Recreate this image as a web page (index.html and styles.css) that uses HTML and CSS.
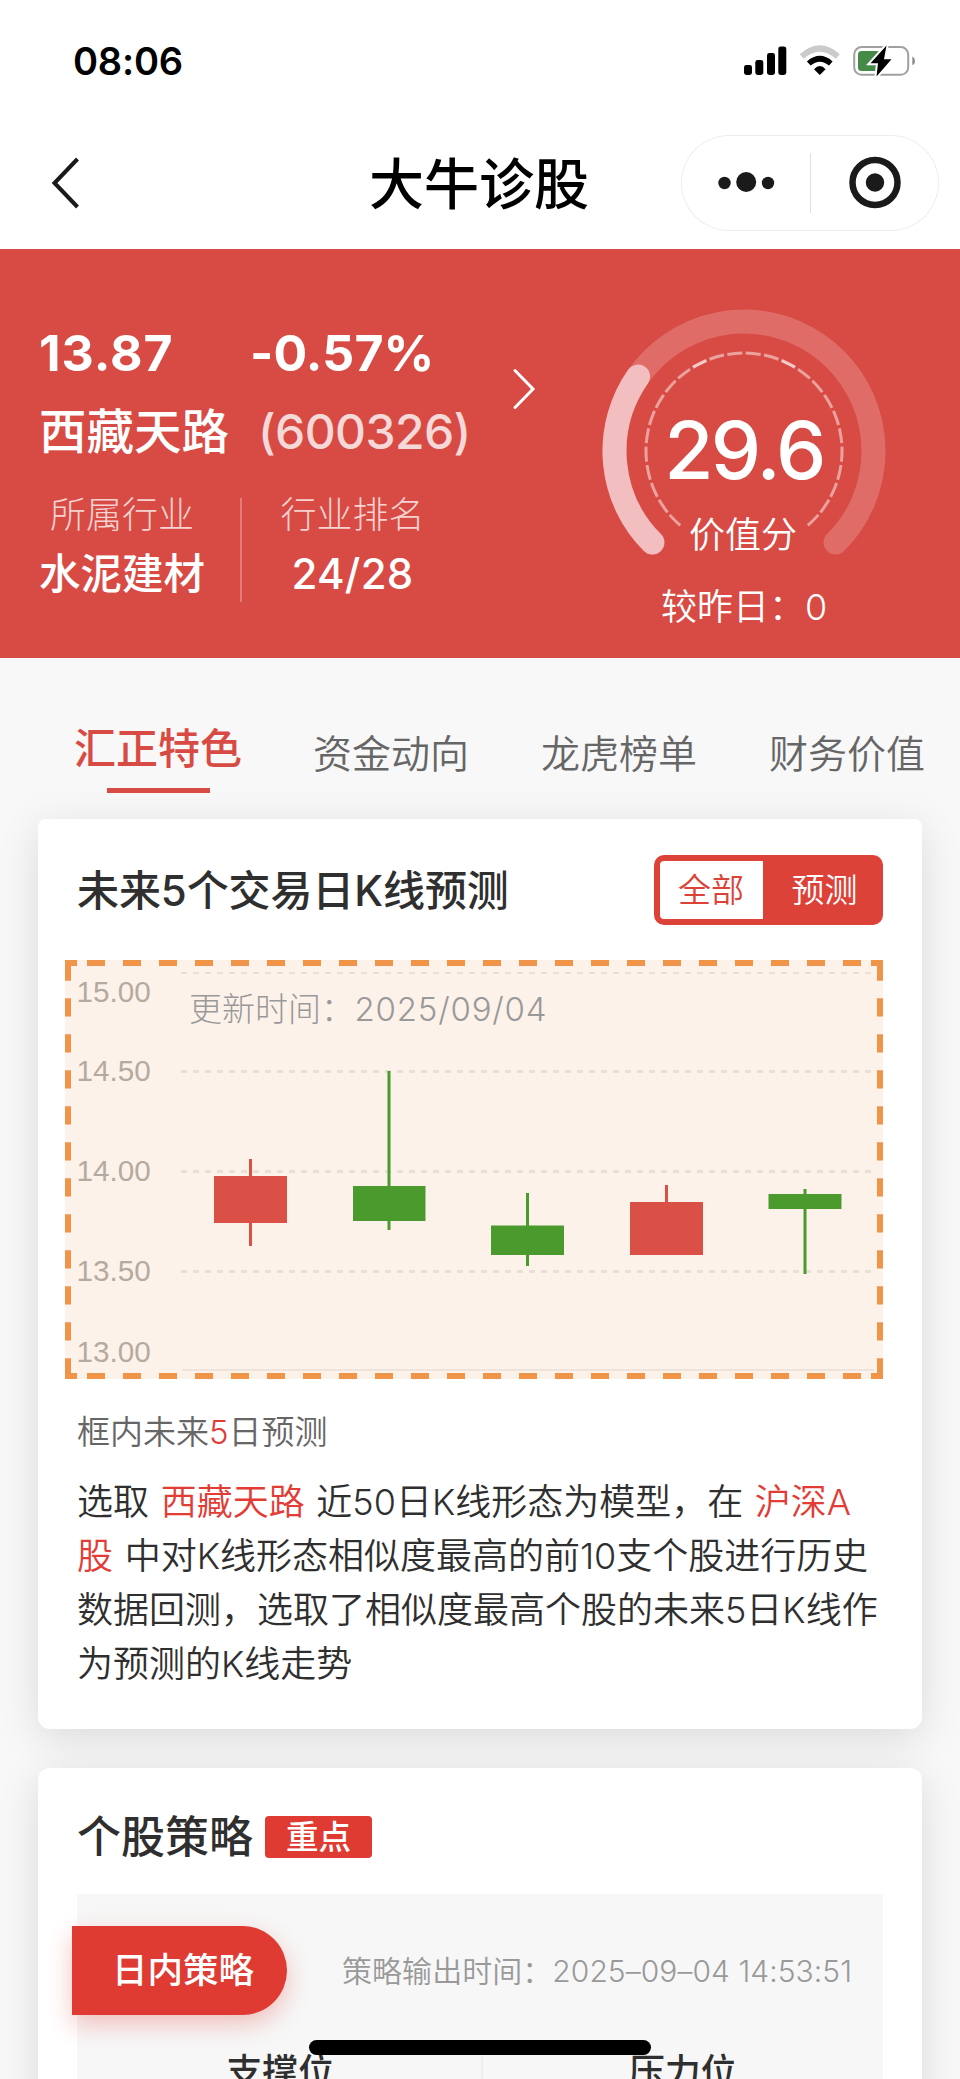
FILE: index.html
```html
<!DOCTYPE html>
<html lang="zh-CN">
<head>
<meta charset="utf-8">
<title>大牛诊股</title>
<link rel="stylesheet" href="styles.css">
</head>
<body>
<div class="screen">
  <header class="top">
    <div class="status">
      <span class="clock">08:06</span>
      <svg class="status-icons" width="176" height="36" viewBox="740 43 176 36">
        <rect x="744" y="65" width="8" height="10" rx="2.4"/>
        <rect x="755.3" y="60" width="8" height="15" rx="2.4"/>
        <rect x="767" y="53" width="8" height="22" rx="2.4"/>
        <rect x="778.3" y="46.500" width="8" height="28.500" rx="2.400"/>
        <path d="M801.700 56.500Q819.800 40.500 837.800 56.500" fill="none" stroke="#cbcbcb" stroke-width="6"/>
        <path d="M808.800 63.500Q819.800 54 830.800 63.500" fill="none" stroke="#000" stroke-width="5.600"/>
        <path d="M819.800 75L814 69.200Q819.800 62.800 825.600 69.200Z"/>
        <rect x="854.200" y="47" width="54" height="27.800" rx="7.500" fill="none" stroke="#a0a0a0" stroke-width="2"/>
        <path d="M912.300 56.500Q915 57.800 915 61T912.300 65.300Z" fill="#8d8d8d"/>
        <rect x="858" y="51" width="22" height="20" rx="3.500" fill="#458b47"/>
        <path d="M886.500 45.500L870.500 63.200H878L876.500 76.500L891.500 59.300H884Z" stroke="#fff" stroke-width="4"/>
        <path d="M886.500 45.500L870.500 63.200H878L876.500 76.500L891.500 59.300H884Z"/>
      </svg>
    </div>
    <div class="nav">
      <svg class="back" width="30" height="54" viewBox="51 156 30 54"><path d="M77.500 159L54.500 183L77.500 207" fill="none" stroke="#1a1a1a" stroke-width="4"/></svg>
      <h1 class="title">大牛诊股</h1>
      <div class="capsule">
        <svg width="258" height="96" viewBox="681 135 258 96">
          <circle cx="724.500" cy="183" r="6.200"/><circle cx="746.200" cy="182" r="10"/><circle cx="768" cy="183" r="6.200"/>
          <path d="M810.500 153V213" stroke="#dedede"/>
          <circle cx="875" cy="182.500" r="22.500" fill="none" stroke="#1a1a1a" stroke-width="6.500"/><circle cx="875" cy="182.500" r="9.200"/>
        </svg>
      </div>
    </div>
  </header>

  <section class="hero">
    <div class="quote">
      <div class="price-row"><b class="price">13.87</b><b class="change">-0.57%</b></div>
      <div class="name-row"><span class="name">西藏天路</span><span class="code">(600326)</span></div>
      <div class="facts">
        <div class="fact industry"><span class="fact-label">所属行业</span><span class="fact-value">水泥建材</span></div>
        <div class="fact rank"><span class="fact-label">行业排名</span><span class="fact-value number">24/28</span></div>
      </div>
    </div>
    <svg class="go" width="26" height="44" viewBox="511 367 26 44"><path d="M515 370.500L533 389L515 407.500" fill="none" stroke="#fff" stroke-width="3" stroke-linecap="round"/></svg>
    <div class="gauge">
      <svg class="dial" width="284" height="250" viewBox="-142 -142 284 250" fill="none">
        <path d="M-91.600 91.600A129.500 129.500 0 1 1 91.600 91.600" stroke="#fff" stroke-opacity=".19" stroke-width="24" stroke-linecap="round"/>
        <path d="M-91.600 91.600A129.500 129.500 0 0 1 -105.900 -74.500" stroke="#f2bec0" stroke-width="24" stroke-linecap="round"/>
        <g stroke="#fff" stroke-opacity=".48" stroke-width="3" stroke-dasharray="15.100 3.370" stroke-dashoffset="-1.680">
          <path d="M0 -98A98 98 0 0 1 63.800 74.400"/><path d="M0 -98A98 98 0 0 0 -63.800 74.400"/>
        </g>
        <path d="M-51 -84L-37.500 -90.500M51 -84L37.500 -90.500" stroke="#fff" stroke-opacity=".45" stroke-width="3"/>
      </svg>
      <div class="score"><span class="score-value">29.6</span><span class="score-label">价值分</span><span class="score-diff">较昨日：0</span></div>
    </div>
  </section>

  <nav class="tabs">
    <span class="tab active">汇正特色</span><span class="tab">资金动向</span><span class="tab">龙虎榜单</span><span class="tab">财务价值</span>
  </nav>

  <section class="card forecast">
    <div class="card-head">
      <h2 class="card-title">未来5个交易日K线预测</h2>
      <div class="toggle"><span class="option on">全部</span><span class="option">预测</span></div>
    </div>
    <svg class="chart" width="818" height="419" viewBox="65 960 818 419">
      <rect x="65" y="960" width="818" height="419" fill="#fdf2e9"/>
      <g stroke="#e9dfd6" stroke-dasharray="6 6">
        <path d="M181 973H872" stroke-width="2"/>
        <path d="M181 1071.500H872M181 1171.500H872M181 1271.500H872" stroke-width="3"/>
      </g>
      <path d="M182 1370H874" stroke="#e9dfd6" stroke-width="1.500"/>
      <g stroke="#f0944a" stroke-width="6" fill="none">
        <path d="M87 963H862M87 1376H862" stroke-dasharray="18 18"/>
        <path d="M68 998.300V1341M880 998.300V1341" stroke-dasharray="18.300 17.700"/>
        <path d="M77 963H68V980.700M871 963H880V980.700M77 1376H68V1358.300M871 1376H880V1358.300"/>
      </g>
      <g class="axis"><text x="76.500" y="1002">15.00</text><text x="76.500" y="1081">14.50</text><text x="76.500" y="1181">14.00</text><text x="76.500" y="1281">13.50</text><text x="76.500" y="1362">13.00</text></g>
      <text class="updated" x="189" y="1021">更新时间：<tspan class="date" x="354.500">2025/09/04</tspan></text>
      <g fill="#da5046">
        <path d="M214 1176h73v47h-73zM249 1159h3v87h-3z"/>
        <path d="M630 1202h73v53h-73zM665 1185h3v30h-3z"/>
      </g>
      <g fill="#4a9a2e">
        <path d="M353 1186h72.500v35h-72.500zM387.500 1071h3v159h-3z"/>
        <path d="M491 1225.500h73v29.500h-73zM526 1193h3v73h-3z"/>
        <path d="M768.500 1194h73v15h-73zM803.500 1189h3v85h-3z"/>
      </g>
    </svg>
    <p class="note">框内未来<em>5</em>日预测</p>
    <p class="explain"><span class="line">选取 <em>西藏天路</em> 近50日K线形态为模型，在 <em>沪深A</em></span><span class="line"><em>股</em> 中对K线形态相似度最高的前10支个股进行历史</span><span class="line">数据回测，选取了相似度最高个股的未来5日K线作</span><span class="line">为预测的K线走势</span></p>
  </section>

  <section class="card strategy">
    <div class="strategy-head"><h2 class="strategy-title">个股策略</h2><span class="badge">重点</span></div>
    <div class="panel">
      <div class="panel-head"><span class="pill">日内策略</span><span class="stamp">策略输出时间：<span class="stamp-time">2025–09–04 14:53:51</span></span></div>
      <div class="levels"><span class="level">支撑位</span><span class="level">压力位</span></div>
    </div>
  </section>
  <div class="home-bar"></div>
</div>
</body>
</html>
```
FILE: styles.css
```css
* { box-sizing: border-box; margin: 0; padding: 0; }
body { background: #f8f8f8; font-family: Inter, "Noto Sans CJK SC", sans-serif; color: #2f2f2f; }
svg { display: block; flex: none; }
span, b, h1, h2 { white-space: nowrap; }
em { font-style: normal; color: #e23c35; }
.screen { position: relative; width: 960px; height: 2079px; overflow: hidden; background: #f8f8f8; }

.top { height: 249px; background: #fff; }
.status { display: flex; justify-content: space-between; height: 122px; padding: 43px 44px 0 73px; }
.clock { font-size: 38px; line-height: 36px; font-weight: 600; color: #000; letter-spacing: -.2px; }
.nav { display: flex; align-items: flex-start; height: 127px; }
.back { margin: 34px 0 0 51px; }
.title { margin: 28px 0 0 288px; width: 312px; font-size: 55px; line-height: 68px; font-weight: 500; color: #000; }
.capsule { margin-top: 13px; width: 258px; height: 96px; border-radius: 48px; box-shadow: inset 0 0 0 1px #ededed; fill: #1a1a1a; }

.hero { display: flex; height: 409px; background: #d84b44; color: #fff; }
.quote { width: 511px; padding: 74px 0 0 39px; }
.price-row { display: flex; height: 60px; font-size: 50px; line-height: 60px; font-weight: 650; }
.price { width: 211px; font-weight: 650; letter-spacing: 1px; }
.change { font-weight: 650; letter-spacing: .1px; }
.name-row { display: flex; height: 76px; padding-top: 17px; margin-top: 2px; font-size: 48px; line-height: 60px; }
.name { width: 219px; font-size: 47.500px; font-weight: 500; }
.code { color: #f5d8d8; letter-spacing: -.6px; font-weight: 450; }
.facts { display: flex; margin-top: 37px; height: 104px; }
.fact { display: flex; flex-direction: column; align-items: center; }
.industry { width: 203px; padding-right: 35px; border-right: 2px solid #e17c77; }
.rank { width: 221px; }
.fact-label { font-size: 36px; line-height: 34px; font-weight: 300; color: #f6d2d0; }
.fact-value { margin-top: 21px; font-size: 41.500px; line-height: 42px; font-weight: 500; }
.number { font-size: 42px; letter-spacing: .3px; }
.go { margin-top: 118px; }
.gauge { margin-left: 65px; width: 284px; padding-top: 60px; }
.dial { height: 250px; }
.score { display: flex; flex-direction: column; align-items: center; margin-top: -156px; }
.score-value { margin-top: 7px; font-size: 80px; line-height: 80px; font-weight: 550; letter-spacing: -2.600px; }
.score-label { margin: 25px 2px 0 0; font-size: 36px; line-height: 40px; font-weight: 350; }
.score-diff { margin-top: 32px; font-size: 36px; line-height: 40px; font-weight: 350; }

.tabs { display: flex; height: 161px; padding: 66px 0 0 74px; gap: 72px; }
.tab { height: 70px; padding-top: 1px; font-size: 39px; line-height: 58px; color: #666; font-weight: 350; }
.active { width: 167px; font-size: 42px; line-height: 48px; font-weight: 500; color: #d84b44; background: linear-gradient(#d84b44, #d84b44) 33px 64px / 103px 5px no-repeat; }

.card { margin: 0 38px; background: #fff; border-radius: 12px; box-shadow: 0 9px 42px rgba(0, 0, 0, .12); }
.forecast { height: 910px; padding: 36px 39px 0; border-radius: 8px 8px 12px 12px; }
.card-head { display: flex; justify-content: space-between; height: 70px; }
.card-title { padding-top: 1px; font-size: 42px; line-height: 70px; font-weight: 500; letter-spacing: -.1px; }
.toggle { display: flex; width: 229px; height: 70px; padding: 6px; background: #dd4238; border-radius: 10px; }
.option { width: 103px; padding-right: 1px; text-align: center; color: #fff; font-size: 33px; line-height: 58px; font-weight: 350; }
.option + .option { width: 114px; padding: 0 0 0 9px; }
.on { background: #fff; color: #dd4238; border-radius: 4px 0 0 4px; }
.chart { margin: 35px 0 0 -12px; }
.axis { font: 29.700px "Liberation Sans", sans-serif; fill: #b5aaa0; }
.updated { font-size: 33px; fill: #999; font-weight: 300; }
.date { letter-spacing: .8px; }
.note { margin-top: 33px; font-size: 33px; line-height: 40px; color: #666; font-weight: 350; }
.explain { margin-top: 23px; font-size: 36px; line-height: 54px; font-weight: 350; word-spacing: 1.500px; }
.line { display: block; }

.strategy { height: 500px; margin-top: 39px; padding: 36px 39px 0; }
.strategy-head { display: flex; align-items: center; height: 64px; padding-top: 2px; }
.strategy-title { font-size: 44px; line-height: 62px; font-weight: 500; }
.badge { margin-left: 12px; width: 107px; height: 42px; border-radius: 4px; background: #df3b33; color: #fff; text-align: center; font-size: 32.500px; line-height: 43px; font-weight: 500; }
.panel { height: 300px; margin-top: 26px; padding-top: 32px; background: #f7f7f7; }
.panel-head { display: flex; height: 89px; }
.pill { width: 215px; height: 89px; margin-left: -5px; padding-left: 40px; border-radius: 0 44.500px 44.500px 0; background: #df3b33; color: #fff; font-size: 35.500px; line-height: 90px; font-weight: 500; box-shadow: 0 9px 24px rgba(223, 59, 51, .3); }
.stamp { margin-left: 55px; font-size: 30px; line-height: 90px; color: #999; font-weight: 350; letter-spacing: .05px; }
.levels { display: flex; margin-top: 35px; padding-left: 3px; }
.level { flex: 1; text-align: center; font-size: 36px; line-height: 44px; font-weight: 500; }
.level + .level { border-left: 2px solid #eee; }
.home-bar { position: absolute; left: 309px; top: 2040px; width: 342px; height: 15px; border-radius: 8px; background: #000; }
```
